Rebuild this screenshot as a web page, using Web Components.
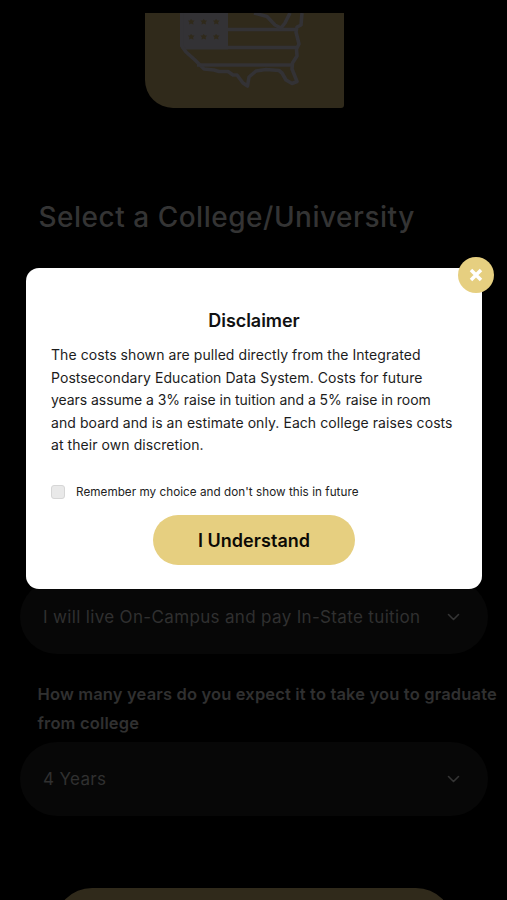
<!DOCTYPE html>
<html lang="en">
<head>
<meta charset="utf-8">
<title>Select a College/University</title>
<style>
body{margin:0;background:#000;font-family:Inter,"Liberation Sans",sans-serif;height:900px;overflow:hidden}
.tight{letter-spacing:-.05px}
</style>
</head>
<body>
<college-page>
  <map-card></map-card>
  <page-heading>Select a College/University</page-heading>
  <select-pill>I will live On-Campus and pay In-State tuition</select-pill>
  <field-label>How many years do you expect it to take you to graduate from college</field-label>
  <select-pill>4 Years</select-pill>
  <submit-bar></submit-bar>
  <disclaimer-dialog slot="overlay">
    <span slot="title">Disclaimer</span>
    The costs shown are pulled directly from the Integrated<br>Postsecondary Education Data System. Costs for future<br><span class="tight">years assume a 3% raise in tuition and a 5% raise in room</span><br>and board and is an estimate only. Each college raises costs<br>at their own discretion.
    <check-option slot="option">Remember my choice and don't show this in future</check-option>
    <pill-button slot="action">I Understand</pill-button>
  </disclaimer-dialog>
</college-page>
<script>
function define(name, html) {
  const template = document.createElement('template');
  template.innerHTML = html;
  customElements.define(name, class extends HTMLElement {
    constructor() {
      super();
      this.attachShadow({mode: 'open'}).append(template.content.cloneNode(true));
    }
  });
}

define('college-page', `
<style>
:host{display:block;position:relative;height:900px;overflow:hidden;background:#000}
main{display:flex;flex-direction:column;padding-top:13px}
.overlay{position:absolute;left:26px;top:268px;width:456px}
</style>
<main><slot></slot></main>
<div class="overlay"><slot name="overlay"></slot></div>`);

define('map-card', `
<style>
:host{display:block;width:199px;height:95px;margin-left:145px;background:#302a1b;border-radius:0 0 3px 28px;overflow:hidden}
svg{display:block}
</style>
<svg width="199" height="95" viewBox="145 13 199 95" fill="none" stroke="#333235" stroke-width="3.6" stroke-linejoin="round">
  <path d="M180 13H228V49.500H182L180 45Z" fill="#333235" stroke="none"/>
  <path d="M181.800 13V46L186 52 195 60 204 69 214 70 219 71.500 228 71.500 233 75 237 75 243 83 247.500 86 249 77 256 71 266 69.500 279 70.500 282 73 286 80 292 83.500 297 81.500 292 69 292.500 63 297 56 296.500 49 299 44 297.500 38 296 32 297 27 301 25 302 13"/>
  <path d="M228 29.500H296M228 47.500H297M197 65H291"/>
  <path d="M254 13 267 16.500 275 25 281 28 285 23 290 13"/>
  <g fill="#302a1b" stroke="none">
    <path id="s" d="M188 20.500H190L191 19 192.500 20.500H194.500L193 22.500 193.500 24.500 191 23.500 189 24.500 189.500 22.500Z"/>
    <use href="#s" x="12.500"/><use href="#s" x="25"/>
    <use href="#s" y="15"/><use href="#s" x="12.500" y="15"/><use href="#s" x="25" y="15"/>
  </g>
</svg>`);

define('page-heading', `
<style>
:host{display:block;margin:91px 0 0 38.500px;font-size:28px;line-height:36px;font-weight:500;letter-spacing:.51px;color:#343434;white-space:nowrap}
</style><slot></slot>`);

define('select-pill', `
<style>
:host{display:flex;align-items:center;justify-content:space-between;box-sizing:border-box;width:468px;height:74px;margin-left:20px;padding:0 28px 0 23px;border-radius:37px;background:#070707;color:#303030;font-size:17px;letter-spacing:.34px;white-space:nowrap}
:host(:nth-of-type(1)){margin-top:345px}
svg{display:block}
</style>
<span><slot></slot></span>
<svg width="13" height="10" viewBox="0 0 13 10" fill="none" stroke="#343434" stroke-width="1.600" stroke-linecap="round" stroke-linejoin="round"><path d="M1.500 2.500 6.500 7.500 11.500 2.500"/></svg>`);

define('field-label', `
<style>
:host{display:block;margin:25.500px 0 3.500px 37.500px;width:468px;font-size:16.500px;line-height:29.500px;font-weight:580;letter-spacing:.155px;color:#303030}
</style><slot></slot>`);

define('submit-bar', `
<style>
:host{display:block;width:398px;height:74px;margin:72px 0 0 55px;border-radius:37px;background:#302a1b}
</style>`);

define('disclaimer-dialog', `
<style>
:host{display:flex;flex-direction:column;position:relative;box-sizing:border-box;height:321px;padding:41px 25px 0;background:#fff;border-radius:13px;color:#1c1c1c}
h2{margin:0 0 11px;font-size:18px;line-height:24px;font-weight:600;letter-spacing:-.05px;text-align:center;color:#111}
p{margin:0;font-size:14px;line-height:22.500px;letter-spacing:.065px;white-space:nowrap}
close-button{position:absolute;right:-12px;top:-11.500px}
.option{margin-top:27px}
.action{display:flex;justify-content:center;margin-top:15px}
</style>
<h2><slot name="title"></slot></h2>
<p><slot></slot></p>
<div class="option"><slot name="option"></slot></div>
<div class="action"><slot name="action"></slot></div>
<close-button></close-button>`);

define('close-button', `
<style>
:host{display:grid;place-items:center;width:36px;height:36px;border-radius:50%;background:#e6cf80}
</style>
<svg width="14" height="14" viewBox="0 0 14 14" stroke="#fff" stroke-width="3.500"><path d="M2 2 12 12M12 2 2 12"/></svg>`);

define('check-option', `
<style>
:host{display:flex;align-items:center;gap:11px;height:16px;font-size:11.700px;line-height:16px;letter-spacing:.04px;color:#222;white-space:nowrap}
i{box-sizing:border-box;width:14px;height:14px;border:1px solid #d6d6d6;border-radius:3px;background:#e9e9e9}
</style><i></i><span><slot></slot></span>`);

define('pill-button', `
<style>
:host{display:flex;align-items:center;justify-content:center;box-sizing:border-box;width:202.500px;height:50px;padding-top:2px;border-radius:25px;background:#e6cf80;font-size:18px;font-weight:600;letter-spacing:.04px;color:#0c0a05}
</style><slot></slot>`);
</script>
</body>
</html>
